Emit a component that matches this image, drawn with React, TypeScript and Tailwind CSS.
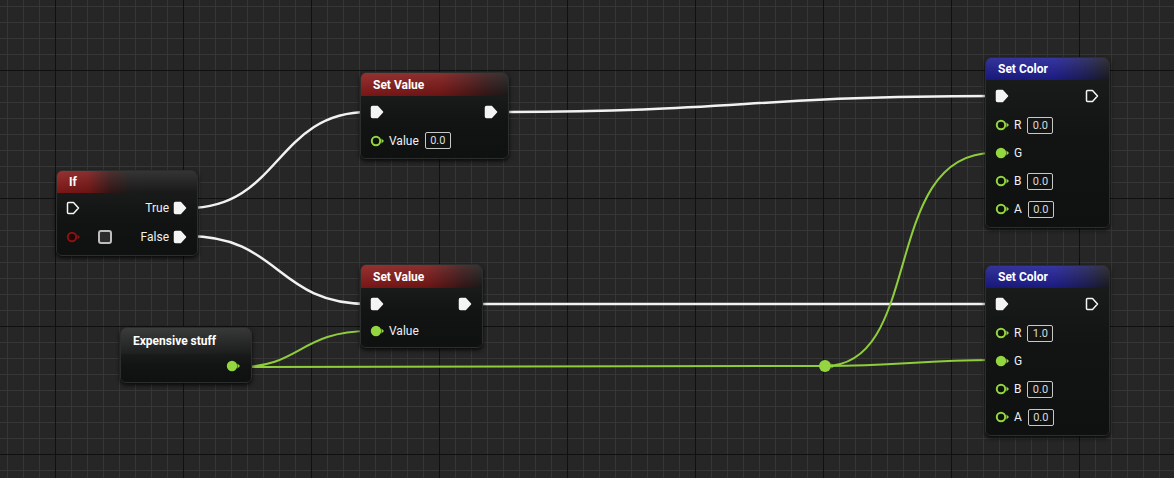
import type { ReactNode } from "react";

const GREEN = "#93d63f";

type Tint = "red" | "ifRed" | "blue" | "gray";

const headerBg: Record<Tint, string> = {
  red: "bg-[linear-gradient(90deg,#8c1a1a_0%,#7d1717_55%,#3a1818_85%,#1e1c1c_100%)]",
  ifRed: "bg-[linear-gradient(90deg,#8c1a1a_0%,#7d1717_22%,#3a1818_38%,#1f1d1d_52%,#1d1d1d_100%)]",
  blue: "bg-[linear-gradient(90deg,#1c1c8e_0%,#1f1f96_55%,#1e1e5a_82%,#1c1c22_100%)]",
  gray: "bg-[linear-gradient(90deg,#242625_0%,#202221_100%)]",
};

function ExecPin({ filled }: { filled?: boolean }) {
  return (
    <svg width="14" height="14" viewBox="0 0 14 14" className="shrink-0">
      <path
        d="M2.5 1.5 H7.5 L12.5 7 L7.5 12.5 H2.5 Q1.5 12.5 1.5 11.5 V2.5 Q1.5 1.5 2.5 1.5Z"
        fill={filled ? "#f4f4f4" : "none"}
        stroke="#f4f4f4"
        strokeWidth="1.5"
        strokeLinejoin="round"
      />
    </svg>
  );
}

function DataPin({ filled, color = GREEN, core = "#0d1309" }: { filled?: boolean; color?: string; core?: string }) {
  return (
    <svg width="15" height="12" viewBox="0 0 15 12" className="shrink-0">
      <circle cx="6" cy="6" r="4.2" fill={filled ? color : core} stroke={color} strokeWidth="2" />
      <path d="M11.5 3.6 L14 6 L11.5 8.4Z" fill={color} />
    </svg>
  );
}

function ValueBox({ v }: { v: string }) {
  return (
    <span className="ml-1.5 flex h-[17px] w-[26px] items-center justify-center rounded-[2px] border border-[#c8c8c8] text-[11px] leading-none text-[#dcdcdc]">
      {v}
    </span>
  );
}

function Node({
  x,
  y,
  w,
  tint,
  title,
  headerH = "h-[23px]",
  children,
}: {
  x: number;
  y: number;
  w: number;
  tint: Tint;
  title: string;
  headerH?: string;
  children: ReactNode;
}) {
  return (
    <div
      className="absolute overflow-hidden rounded-[6px] border border-[#2c2e2d] bg-[#121413] shadow-[0_2px_4px_rgba(0,0,0,0.8)]"
      style={{ left: x, top: y, width: w }}
    >
      <div className={`relative flex items-center px-3 ${headerH} ${headerBg[tint]}`}>
        <div className="absolute inset-0 bg-[linear-gradient(180deg,rgba(255,255,255,0.1)_0%,rgba(0,0,0,0.15)_100%)]" />
        <span className="relative text-[12px] font-bold text-white">{title}</span>
      </div>
      <div className="bg-[linear-gradient(180deg,#191b1a_0%,#121413_40%,#0f1110_100%)] pb-1">{children}</div>
    </div>
  );
}

function Row({ h = "h-7", children }: { h?: string; children: ReactNode }) {
  return <div className={`flex items-center pl-[9px] pr-[10px] ${h}`}>{children}</div>;
}

function Label({ children }: { children: ReactNode }) {
  return <span className="ml-1 text-[12px] text-[#f0f0f0]">{children}</span>;
}

function ColorNode({ x, y, r }: { x: number; y: number; r: string }) {
  return (
    <Node x={x} y={y} w={125} tint="blue" title="Set Color" headerH="h-[22px]">
      <Row h="h-[31px]">
        <ExecPin filled />
        <div className="flex-1" />
        <ExecPin />
      </Row>
      <Row>
        <DataPin />
        <Label>R</Label>
        <ValueBox v={r} />
      </Row>
      <Row>
        <DataPin filled />
        <Label>G</Label>
      </Row>
      <Row>
        <DataPin />
        <Label>B</Label>
        <ValueBox v="0.0" />
      </Row>
      <Row>
        <DataPin />
        <Label>A</Label>
        <ValueBox v="0.0" />
      </Row>
    </Node>
  );
}

export default function App() {
  return (
    <div
      className="relative h-[478px] w-[1174px] overflow-hidden bg-[#262626] font-['Roboto',sans-serif] [background-image:linear-gradient(#101010_1px,transparent_1px),linear-gradient(90deg,#101010_1px,transparent_1px),linear-gradient(#363636_1px,transparent_1px),linear-gradient(90deg,#363636_1px,transparent_1px)] [background-position:55px_70px,55px_70px,7px_6px,7px_6px] [background-size:128px_128px,128px_128px,16px_16px,16px_16px]"
    >
      {/* wires */}
      <svg className="absolute inset-0" width="1174" height="478">
        <g fill="none" stroke="#f2f2f2" strokeWidth="2.5" strokeLinecap="round">
          <path d="M188 208 C 280 208, 276 112, 368 112" />
          <path d="M188 236 C 280 236, 276 304, 368 304" />
          <path d="M498 112 C 740 112, 750 96, 993 96" />
          <path d="M471 304 L 993 304" />
        </g>
        <g fill="none" stroke="#8fcd3c" strokeWidth="2" strokeLinecap="round">
          <path d="M240 367 C 300 367, 300 331, 370 331" />
          <path d="M240 367 L 825 366" />
          <path d="M825 366 C 925 366, 880 153, 993 153" />
          <path d="M825 366 C 900 366, 920 360, 993 360" />
        </g>
        <circle cx="825" cy="366" r="6" fill={GREEN} />
        <path d="M831.5 363.5 L834 366 L831.5 368.5Z" fill={GREEN} />
      </svg>

      {/* If */}
      <Node x={56} y={170} w={142} tint="ifRed" title="If" headerH="h-[22px]">
        <Row h="h-[30px]">
          <ExecPin />
          <div className="flex-1" />
          <span className="mr-1 text-[12px] text-[#f0f0f0]">True</span>
          <ExecPin filled />
        </Row>
        <Row>
          <DataPin color="#8a1212" core="#220606" />
          <span className="ml-[17px] h-[14px] w-[14px] rounded-[3px] border-2 border-[#bdbdbd] bg-[#2c2c2c]" />
          <div className="flex-1" />
          <span className="mr-1 text-[12px] text-[#f0f0f0]">False</span>
          <ExecPin filled />
        </Row>
      </Node>

      {/* Set Value top */}
      <Node x={360} y={72} w={149} tint="red" title="Set Value">
        <Row h="h-[31px]">
          <ExecPin filled />
          <div className="flex-1" />
          <ExecPin filled />
        </Row>
        <Row h="h-[27px]">
          <DataPin />
          <Label>Value</Label>
          <ValueBox v="0.0" />
        </Row>
      </Node>

      {/* Set Value bottom */}
      <Node x={360} y={264} w={123} tint="red" title="Set Value">
        <Row h="h-[31px]">
          <ExecPin filled />
          <div className="flex-1" />
          <ExecPin filled />
        </Row>
        <Row h="h-[24px]">
          <DataPin filled />
          <Label>Value</Label>
        </Row>
      </Node>

      {/* Expensive stuff */}
      <Node x={120} y={327} w={132} tint="gray" title="Expensive stuff" headerH="h-[26px]">
        <div className="flex h-6 items-center justify-end pr-[10px]">
          <DataPin filled />
        </div>
      </Node>

      <ColorNode x={985} y={57} r="0.0" />
      <ColorNode x={985} y={265} r="1.0" />
    </div>
  );
}
